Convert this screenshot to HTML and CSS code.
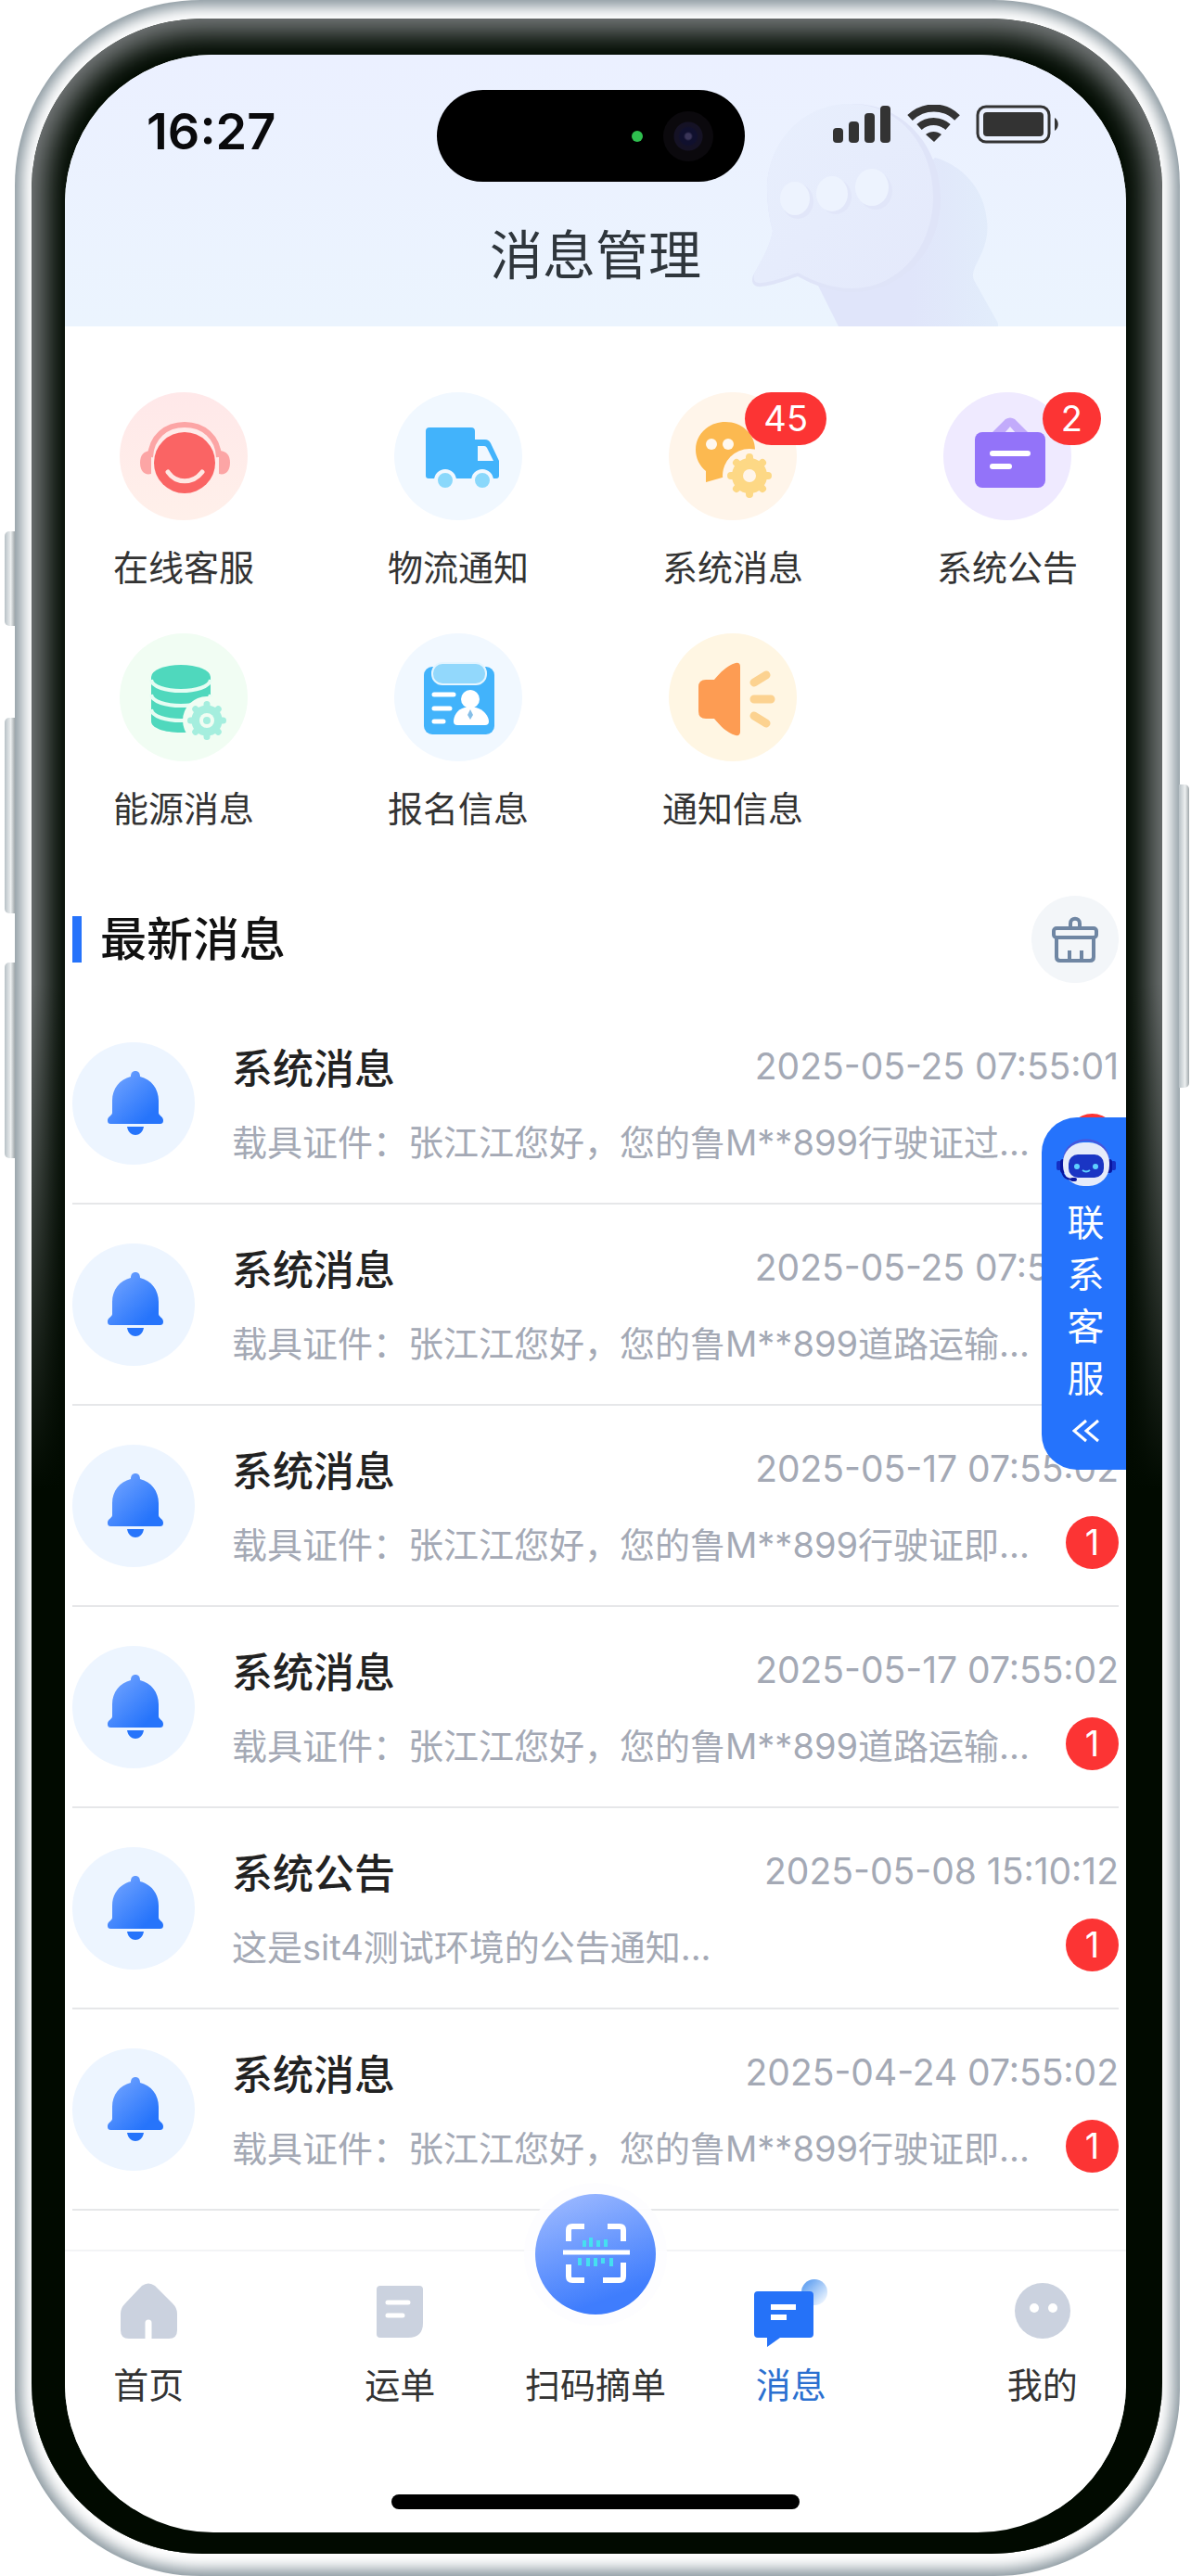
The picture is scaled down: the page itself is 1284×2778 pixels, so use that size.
FILE: index.html
```html
<!DOCTYPE html>
<html lang="zh-CN">
  <head>
    <meta charset="UTF-8">
    <meta name="viewport" content="width=device-width, initial-scale=1">
    <title>消息管理</title>
    <link rel="stylesheet" href="styles.css">
  </head>
  <body>
    <!-- Shared icons -->
    <svg class="defs" width="0" height="0" aria-hidden="true">
      <defs>
        <linearGradient id="bell-fill" x1="0" y1="0" x2="1" y2="1">
          <stop offset="0.1" stop-color="#6fa2ff"/>
          <stop offset="0.8" stop-color="#2674fb"/>
        </linearGradient>
        <symbol id="bell" viewBox="0 0 132 132">
          <path d="M68 31c3 0 5 2 5 6 12 3 20 13 20 26v13c0 3 5 4 5 8 0 3-1 4-4 4H42c-3 0-4-1-4-4 0-4 5-5 5-8V63c0-13 8-23 20-26 0-4 2-6 5-6z" fill="url(#bell-fill)"/>
          <path d="M59 91h18c-1 6-5 9-9 9s-8-3-9-9z" fill="#2674fb"/>
        </symbol>
        <symbol id="gear" viewBox="-24 -24 48 48">
          <circle r="13" fill="none" stroke="currentColor" stroke-width="12"/>
          <path d="M0-17V-20M0 17V20M-17 0H-20M17 0H20M12-12L14-14M-12-12L-14-14M12 12L14 14M-12 12L-14 14" stroke="currentColor" stroke-width="8" stroke-linecap="round"/>
        </symbol>
      </defs>
    </svg>

    <div class="phone">
      <span class="side-key key-mute"></span>
      <span class="side-key key-up"></span>
      <span class="side-key key-down"></span>
      <span class="side-key key-power"></span>
      <div class="bezel">
        <div class="screen">
          <header class="header">
            <svg class="header-art" viewBox="0 0 266 240" aria-hidden="true">
              <defs>
                <linearGradient id="bubble-fill" x1="0" y1="0" x2="1" y2="1">
                  <stop offset="0" stop-color="#e8effd"/>
                  <stop offset="1" stop-color="#e4e9fb"/>
                </linearGradient>
                <linearGradient id="back-fill" x1="0" y1="0" x2="1" y2="0">
                  <stop offset="0.5" stop-color="#e0e5fa"/>
                  <stop offset="1" stop-color="#e2edfb"/>
                </linearGradient>
              </defs>
              <path d="M72 196L94 240h174l-28-50c-6-14 18-30 14-64-3-36-28-60-56-68z" fill="url(#back-fill)"/>
              <path d="M110 0c54 0 94 46 94 102 0 58-42 101-96 101-20 0-40-7-58-17-14 5-28 10-39 11-8 1-12-4-9-12 8-14 18-30 21-48-4-14-6-30-6-44C17 40 58 0 110 0z" fill="#dfe4f8"/>
              <path d="M106 0c54 0 90 46 90 100 0 56-38 99-88 99-20 0-40-7-58-17-14 5-28 10-39 11-8 1-10-4-7-12 8-14 16-28 19-44-4-14-6-30-6-44C17 40 56 0 106 0z" fill="url(#bubble-fill)"/>
              <g fill="#e1e6f9">
                <ellipse cx="50" cy="105" rx="17" ry="19"/>
                <ellipse cx="91" cy="100" rx="17" ry="19"/>
                <ellipse cx="134" cy="94" rx="18" ry="20"/>
              </g>
              <g fill="#edf3fe">
                <ellipse cx="47" cy="102" rx="16" ry="18"/>
                <ellipse cx="87" cy="97" rx="17" ry="19"/>
                <ellipse cx="130" cy="90" rx="18" ry="20"/>
              </g>
            </svg>
            <div class="status-bar">
              <span class="time">16:27</span>
              <div class="island">
                <span class="mic-dot"></span>
                <span class="lens"></span>
              </div>
              <svg class="status-icons" width="244" height="42" viewBox="0 0 244 42" fill="#333" aria-label="信号 无线网络 电池">
                <rect x="0" y="25" width="11" height="16" rx="4"/>
                <rect x="17" y="18" width="11" height="23" rx="4"/>
                <rect x="34" y="9" width="11" height="32" rx="4"/>
                <rect x="51" y="1" width="11" height="40" rx="4"/>
                <g fill="none" stroke="#333" stroke-width="8">
                  <path d="M83 14C98 0 120 0 134 14"/>
                  <path d="M93 24C102 16 115 16 124 24"/>
                </g>
                <path d="M100 32c5-4 12-4 17 0l-8 8z"/>
                <rect x="156" y="2" width="77" height="38" rx="9" fill="none" stroke="#333" stroke-width="3"/>
                <rect x="162" y="8" width="65" height="26" rx="4"/>
                <path d="M239 14c5 3 5 11 0 14z"/>
              </svg>
            </div>
            <h1>消息管理</h1>
          </header>

          <main>
            <nav class="categories" aria-label="消息分类">
              <a class="category" href="#service">
                <span class="category-icon red">
                  <svg viewBox="0 0 138 138">
                    <path d="M33 70C34 48 50 35 70 35S106 48 107 70" fill="none" stroke="#fca5a5" stroke-width="6"/>
                    <path d="M34 63v25c-7 2-12-3-12-12 0-8 4-13 12-13zM107 63v25c7 2 12-3 12-12 0-8-4-13-12-13z" fill="#fca5a5"/>
                    <circle cx="70" cy="76" r="33" fill="#fa6464"/>
                    <path d="M52 86c9 13 27 13 37 0" fill="none" stroke="#ffe7e3" stroke-width="5" stroke-linecap="round"/>
                  </svg>
                </span>
                <span>在线客服</span>
              </a>
              <a class="category" href="#logistics">
                <span class="category-icon blue">
                  <svg viewBox="0 0 138 138">
                    <path d="M38 38h45q4 0 4 4v9h11q4 0 6 4l9 19v16q0 3-3 3H37q-3 0-3-3V42q0-4 4-4z" fill="#42b3fb"/>
                    <path d="M90 58h7q2 0 3 2l7 14H90z" fill="#f1f8ff"/>
                    <g fill="#8ad8fb" stroke="#f1f8ff" stroke-width="4">
                      <circle cx="55" cy="95" r="10"/>
                      <circle cx="95" cy="95" r="10"/>
                    </g>
                  </svg>
                </span>
                <span>物流通知</span>
              </a>
              <a class="category" href="#system">
                <span class="category-icon orange">
                  <svg viewBox="0 0 138 138">
                    <path d="M61 32c18 0 32 13 32 30S79 90 61 91L40 97V85C33 79 29 71 29 62c0-17 14-30 32-30z" fill="#fcb950"/>
                    <circle cx="46" cy="56" r="6" fill="#fff8ef"/>
                    <circle cx="64" cy="56" r="6" fill="#fff8ef"/>
                    <circle cx="87" cy="90" r="29" fill="#fff5ea"/>
                    <use href="#gear" x="63" y="66" width="48" height="48" color="#fdd885"/>
                  </svg>
                  <span class="badge">45</span>
                </span>
                <span>系统消息</span>
              </a>
              <a class="category" href="#notice">
                <span class="category-icon purple">
                  <svg viewBox="0 0 138 138">
                    <path d="M52 44L67 29q5-3 10 0l15 15H78l-6-7-6 7z" fill="#c2abfb"/>
                    <rect x="34" y="43" width="76" height="60" rx="8" fill="#9373f9"/>
                    <path d="M53 66h38M53 80h18" stroke="#fff" stroke-width="6" stroke-linecap="round"/>
                  </svg>
                  <span class="badge">2</span>
                </span>
                <span>系统公告</span>
              </a>
              <a class="category" href="#energy">
                <span class="category-icon green">
                  <svg viewBox="0 0 138 138">
                    <path d="M34 47v48c0 7 14 12 32 12s32-5 32-12V47z" fill="#4fd8bd"/>
                    <ellipse cx="66" cy="47" rx="32" ry="13" fill="#4fd8bd"/>
                    <path d="M34 50c2 16 62 16 64 0M34 66c2 16 62 16 64 0M34 82c2 16 62 16 64 0" fill="none" stroke="#e6fdf3" stroke-width="4"/>
                    <circle cx="94" cy="94" r="26" fill="#f1fdf3"/>
                    <use href="#gear" x="73" y="73" width="42" height="42" color="#a5eede"/>
                    <circle cx="94" cy="94" r="8" fill="#f1fdf3"/>
                    <circle cx="94" cy="94" r="4" fill="#a5eede"/>
                  </svg>
                </span>
                <span>能源消息</span>
              </a>
              <a class="category" href="#signup">
                <span class="category-icon blue">
                  <svg viewBox="0 0 138 138">
                    <rect x="32" y="36" width="76" height="73" rx="9" fill="#42b3fb"/>
                    <rect x="41" y="32" width="58" height="23" rx="11" fill="#92d8fc" stroke="#e4f5ff" stroke-width="2"/>
                    <path d="M43 66h21M43 81h17M43 95h10" stroke="#fff" stroke-width="5" stroke-linecap="round"/>
                    <circle cx="82" cy="71" r="10" fill="#fff"/>
                    <path d="M76 80h12c8 2 14 9 14 15q0 4-4 4H68q-4 0-4-4c0-6 4-13 12-15z" fill="#fff"/>
                    <path d="M82 82l3 6-3 5-3-5z" fill="#86bfe8"/>
                  </svg>
                </span>
                <span>报名信息</span>
              </a>
              <a class="category" href="#inform">
                <span class="category-icon yellow">
                  <svg viewBox="0 0 138 138">
                    <path d="M72 32q5-1 5 4v70q0 5-5 4C62 107 56 100 49 92h-9q-8 0-8-8V58q0-8 8-8h9C56 42 62 35 72 32z" fill="#fd9c53"/>
                    <path d="M92 71h18M92 53l13-8M92 89l13 8" stroke="#fcd290" stroke-width="9" stroke-linecap="round"/>
                  </svg>
                </span>
                <span>通知信息</span>
              </a>
            </nav>

            <div class="section-head">
              <h2>最新消息</h2>
              <button class="clear-button" type="button" aria-label="清除未读">
                <svg viewBox="0 0 94 94" fill="none" stroke="#6f86a3" stroke-width="4" stroke-linejoin="round">
                  <path d="M42 34v-4c0-7 10-7 10 0v4"/>
                  <rect x="24" y="35" width="46" height="10" rx="3"/>
                  <path d="M27 46v20q0 4 4 4h32q4 0 4-4V46M41 59v11M54 59v11"/>
                </svg>
              </button>
            </div>

            <ul class="message-list">
              <li class="message">
                <svg class="message-icon"><use href="#bell"/></svg>
                <div class="message-body">
                  <div class="message-row">
                    <h3>系统消息</h3>
                    <time>2025-05-25 07:55:01</time>
                  </div>
                  <div class="message-row">
                    <p>载具证件：张江江您好，您的鲁M**899行驶证过...</p>
                    <span class="badge">1</span>
                  </div>
                </div>
              </li>
              <li class="message">
                <svg class="message-icon"><use href="#bell"/></svg>
                <div class="message-body">
                  <div class="message-row">
                    <h3>系统消息</h3>
                    <time>2025-05-25 07:55:01</time>
                  </div>
                  <div class="message-row">
                    <p>载具证件：张江江您好，您的鲁M**899道路运输...</p>
                    <span class="badge">1</span>
                  </div>
                </div>
              </li>
              <li class="message">
                <svg class="message-icon"><use href="#bell"/></svg>
                <div class="message-body">
                  <div class="message-row">
                    <h3>系统消息</h3>
                    <time>2025-05-17 07:55:02</time>
                  </div>
                  <div class="message-row">
                    <p>载具证件：张江江您好，您的鲁M**899行驶证即...</p>
                    <span class="badge">1</span>
                  </div>
                </div>
              </li>
              <li class="message">
                <svg class="message-icon"><use href="#bell"/></svg>
                <div class="message-body">
                  <div class="message-row">
                    <h3>系统消息</h3>
                    <time>2025-05-17 07:55:02</time>
                  </div>
                  <div class="message-row">
                    <p>载具证件：张江江您好，您的鲁M**899道路运输...</p>
                    <span class="badge">1</span>
                  </div>
                </div>
              </li>
              <li class="message">
                <svg class="message-icon"><use href="#bell"/></svg>
                <div class="message-body">
                  <div class="message-row">
                    <h3>系统公告</h3>
                    <time>2025-05-08 15:10:12</time>
                  </div>
                  <div class="message-row">
                    <p>这是sit4测试环境的公告通知...</p>
                    <span class="badge">1</span>
                  </div>
                </div>
              </li>
              <li class="message">
                <svg class="message-icon"><use href="#bell"/></svg>
                <div class="message-body">
                  <div class="message-row">
                    <h3>系统消息</h3>
                    <time>2025-04-24 07:55:02</time>
                  </div>
                  <div class="message-row">
                    <p>载具证件：张江江您好，您的鲁M**899行驶证即...</p>
                    <span class="badge">1</span>
                  </div>
                </div>
              </li>
            </ul>
          </main>

          <!-- Floating customer service button -->
          <button class="contact" type="button">
            <svg width="64" height="52" viewBox="0 0 64 52" aria-hidden="true">
              <path d="M8 22C12-4 52-4 56 22" fill="none" stroke="#4a55d8" stroke-width="2"/>
              <rect x="0" y="25" width="5" height="10" rx="2" fill="#1530c4"/>
              <rect x="59" y="25" width="5" height="10" rx="2" fill="#1530c4"/>
              <rect x="4" y="23" width="7" height="15" rx="3" fill="#0a17a0"/>
              <rect x="53" y="23" width="7" height="15" rx="3" fill="#0a17a0"/>
              <rect x="7" y="5" width="50" height="47" rx="22" fill="#e6ebfa"/>
              <rect x="13" y="18" width="38" height="25" rx="10" fill="#1a35c4"/>
              <circle cx="22" cy="31" r="3" fill="#5fd0ff"/>
              <circle cx="42" cy="31" r="3" fill="#5fd0ff"/>
              <path d="M28 35q4 3 8 0" fill="none" stroke="#5fd0ff" stroke-width="2"/>
              <path d="M6 36c1 6 5 9 12 9" fill="none" stroke="#0a17a0" stroke-width="2"/>
              <rect x="15" y="43" width="7" height="4" rx="2" fill="#0a17a0"/>
            </svg>
            <span class="contact-text">联系客服</span>
            <svg width="30" height="56" viewBox="0 0 30 56" fill="none" stroke="#fff" stroke-width="3" aria-hidden="true">
              <path d="M15 17L2 28l13 11M28 17L15 28l13 11"/>
            </svg>
          </button>

          <footer class="footer">
            <nav class="tabs" aria-label="主导航">
              <a class="tab" href="#home">
                <svg width="62" height="72" viewBox="0 0 62 72">
                  <path d="M24 8q7-5 14 0l19 19q5 5 5 11v18q0 9-9 9H10q-9 0-9-9V38q0-6 5-11z" fill="#cbd2df"/>
                  <path d="M31 48v17" stroke="#fff" stroke-width="7" stroke-linecap="round"/>
                </svg>
                <span>首页</span>
              </a>
              <a class="tab" href="#waybill">
                <svg width="50" height="72" viewBox="0 0 50 72">
                  <path d="M4 8h42q4 0 4 4v36q0 16-16 16H4q-4 0-4-4V12q0-4 4-4z" fill="#cbd2df"/>
                  <path d="M12 26h22M12 40h16" stroke="#fff" stroke-width="5" stroke-linecap="round"/>
                </svg>
                <span>运单</span>
              </a>
              <a class="tab" href="#scan">
                <span class="scan">
                  <svg viewBox="0 0 130 130" fill="none" stroke="#fff" stroke-width="6">
                    <path d="M36 51V39q0-4 4-4h13M78 35h13q4 0 4 4v12M36 76v13q0 4 4 4h13M73 93h18q4 0 4-4V74" />
                    <path d="M30 63h72" stroke-width="5"/>
                    <path d="M53 50v7M60 47v10M68 50v7M76 49v8M48 69v8M57 69v9M65 69v9M73 69v6M82 69v9" stroke="#45e0f0" stroke-width="4"/>
                  </svg>
                </span>
                <span>扫码摘单</span>
              </a>
              <a class="tab active" href="#messages">
                <svg width="80" height="72" viewBox="0 0 80 72">
                  <defs>
                    <linearGradient id="dot-fill" x1="0" y1="0" x2="1" y2="1">
                      <stop offset="0.2" stop-color="#6ea8f2"/>
                      <stop offset="0.9" stop-color="#f0f7ff"/>
                    </linearGradient>
                  </defs>
                  <circle cx="65" cy="15" r="14" fill="url(#dot-fill)"/>
                  <path d="M4 14h56q4 0 4 4v42q0 4-4 4H28l-14 10V64H4q-4 0-4-4V18q0-4 4-4z" fill="#2572f8"/>
                  <path d="M18 31h27M18 42h17" stroke="#fff" stroke-width="6"/>
                </svg>
                <span>消息</span>
              </a>
              <a class="tab" href="#mine">
                <svg width="60" height="72" viewBox="0 0 60 72">
                  <circle cx="30" cy="35" r="30" fill="#cbd2df"/>
                  <circle cx="21" cy="32" r="5" fill="#fff"/>
                  <circle cx="41" cy="32" r="5" fill="#fff"/>
                </svg>
                <span>我的</span>
              </a>
            </nav>
            <div class="home-indicator"></div>
          </footer>
        </div>
      </div>
    </div>
  </body>
</html>
```

FILE: styles.css
```css
* {
  box-sizing: border-box;
}

body {
  margin: 0;
  background-color: #fff;
  color: #333;
  font-family: Inter, "Noto Sans CJK SC", sans-serif;
  font-size: 38px;
}

h1,
h2,
h3,
p,
ul {
  margin: 0;
  padding: 0;
}

a {
  color: inherit;
  text-decoration: none;
}

button {
  border: none;
  padding: 0;
  font: inherit;
  cursor: pointer;
}

.defs {
  position: absolute;
}

/* Phone body */
.phone {
  position: relative;
  margin: 0 12px 0 16px;
  padding: 20px 19px 24px 18px;
  border-radius: 200px;
  background-color: #fff;
  box-shadow: inset 0 0 16px 7px #84929a;
}

.bezel {
  position: relative;
  padding: 39px 39px 23px 36px;
  border-radius: 184px;
  background-color: #010a00;
  box-shadow: inset 0 0 30px 16px #777b7c;
}

/* Darkens the lower half of the rim */
.bezel::before {
  content: "";
  position: absolute;
  inset: 0;
  border-radius: 184px;
  background: linear-gradient(transparent 38%, #010a00 58%);
}

.side-key {
  position: absolute;
  left: -11px;
  width: 11px;
  border-radius: 5px 0 0 5px;
  background: linear-gradient(90deg, #b8c1c6, #eceff0 60%, #a0a8ab);
}

.key-mute {
  top: 573px;
  height: 102px;
}

.key-up {
  top: 774px;
  height: 211px;
}

.key-down {
  top: 1038px;
  height: 211px;
}

.key-power {
  top: 846px;
  left: auto;
  right: -10px;
  height: 327px;
  border-radius: 0 5px 5px 0;
}

.screen {
  position: relative;
  overflow: hidden;
  border-radius: 160px;
  background-color: #fff;
}

/* Header */
.header {
  position: relative;
  padding: 38px 72px 36px 62px;
  background: linear-gradient(#ebf0ff, #ebf4fe);
}

.header-art {
  position: absolute;
  right: 138px;
  bottom: 0;
  width: 266px;
}

.status-bar {
  position: relative;
  display: grid;
  grid-template-columns: 1fr 332px 1fr;
  align-items: start;
}

.time {
  padding: 15px 0 0 26px;
  color: #0a0a0c;
  font-size: 54px;
  font-weight: 600;
  line-height: 60px;
}

.island {
  display: flex;
  align-items: center;
  justify-content: flex-end;
  gap: 22px;
  height: 99px;
  padding-right: 34px;
  border-radius: 50px;
  background-color: #000;
}

.mic-dot {
  width: 12px;
  height: 12px;
  border-radius: 50%;
  background-color: #2fbf4f;
}

.lens {
  width: 54px;
  height: 54px;
  border-radius: 50%;
  background: radial-gradient(circle, #3a3558 0 3px, #10102e 5px 9px, #151225 11px 15px, #0b090d 16px);
}

.status-icons {
  justify-self: end;
  margin-top: 16px;
}

h1 {
  position: relative;
  margin-top: 40px;
  padding-left: 10px;
  color: #2f363c;
  font-size: 57px;
  font-weight: 400;
  line-height: 80px;
  text-align: center;
}

/* Categories */
.categories {
  display: grid;
  grid-template-columns: repeat(4, 152px);
  justify-content: space-between;
  row-gap: 45px;
  padding: 71px 52px 0;
}

.category {
  display: flex;
  flex-direction: column;
  align-items: center;
  gap: 25px;
  line-height: 52px;
}

.category-icon {
  position: relative;
  width: 138px;
  height: 138px;
  border-radius: 50%;
}

.category-icon svg {
  display: block;
}

.red {
  background: linear-gradient(#ffe8e9, #fff0ea);
}

.blue {
  background-color: #f1f8ff;
}

.orange {
  background-color: #fff5ea;
}

.purple {
  background-color: #efeaff;
}

.green {
  background-color: #f1fdf3;
}

.yellow {
  background-color: #fff6e3;
}

.badge {
  min-width: 57px;
  height: 57px;
  border-radius: 29px;
  background-color: #fc3434;
  color: #fff;
  line-height: 57px;
  text-align: center;
}

.category-icon .badge {
  position: absolute;
  top: 0;
  right: -32px;
  min-width: 63px;
  padding: 0 20px;
}

/* Latest messages */
.section-head {
  display: flex;
  align-items: center;
  justify-content: space-between;
  padding: 68px 8px 22px;
}

h2 {
  border-left: 10px solid #2673fb;
  padding-left: 20px;
  color: #111;
  font-size: 50px;
  font-weight: 500;
  line-height: 50px;
}

.clear-button {
  width: 94px;
  height: 94px;
  border-radius: 50%;
  background-color: #f3f6f9;
}

.clear-button svg {
  display: block;
}

.message-list {
  padding: 0 8px 42px;
  list-style-type: none;
}

.message {
  display: flex;
  align-items: center;
  gap: 40px;
  height: 217px;
  border-bottom: 2px solid #e6e7e9;
}

.message-icon {
  flex: none;
  width: 132px;
  height: 132px;
  border-radius: 50%;
  background-color: #edf5ff;
}

.message-body {
  flex: 1;
  min-width: 0;
}

.message-row {
  display: flex;
  align-items: center;
  justify-content: space-between;
  height: 80px;
  white-space: nowrap;
}

h3 {
  color: #222;
  font-size: 44px;
  font-weight: 500;
}

time,
.message p {
  color: #a4a9b5;
}

time {
  font-size: 39px;
}

/* Contact button */
.contact {
  position: absolute;
  top: 1146px;
  right: 0;
  display: flex;
  flex-direction: column;
  align-items: center;
  width: 91px;
  padding: 22px 0 14px 4px;
  border-radius: 38px 0 0 38px;
  background-color: #2573fc;
  color: #fff;
}

.contact-text {
  width: 40px;
  margin-top: 12px;
  font-size: 40px;
  line-height: 56px;
}

/* Tab bar */
.footer {
  position: relative;
  border-top: 2px solid #f3f4f6;
  background-color: #fff;
}

.tabs {
  display: grid;
  grid-template-columns: minmax(0, 3fr) minmax(0, 6fr) minmax(0, 1fr) minmax(0, 6fr) minmax(0, 3fr);
  align-items: end;
  justify-items: center;
}

.tab {
  display: flex;
  flex-direction: column;
  align-items: center;
  gap: 19px;
  padding-top: 29px;
  line-height: 48px;
  white-space: nowrap;
}

.active {
  color: #2b70d0;
}

.tab svg {
  overflow: visible;
}

.scan {
  width: 130px;
  height: 130px;
  margin: -91px 0 33px;
  border-radius: 50%;
  background: linear-gradient(160deg, #a3bdff, #3f7dfd 80%);
  box-shadow: 0 0 0 12px rgba(253, 253, 255, 0.9);
}

.home-indicator {
  width: 440px;
  height: 16px;
  margin: 94px auto 25px;
  border-radius: 8px;
  background-color: #000;
}
```
